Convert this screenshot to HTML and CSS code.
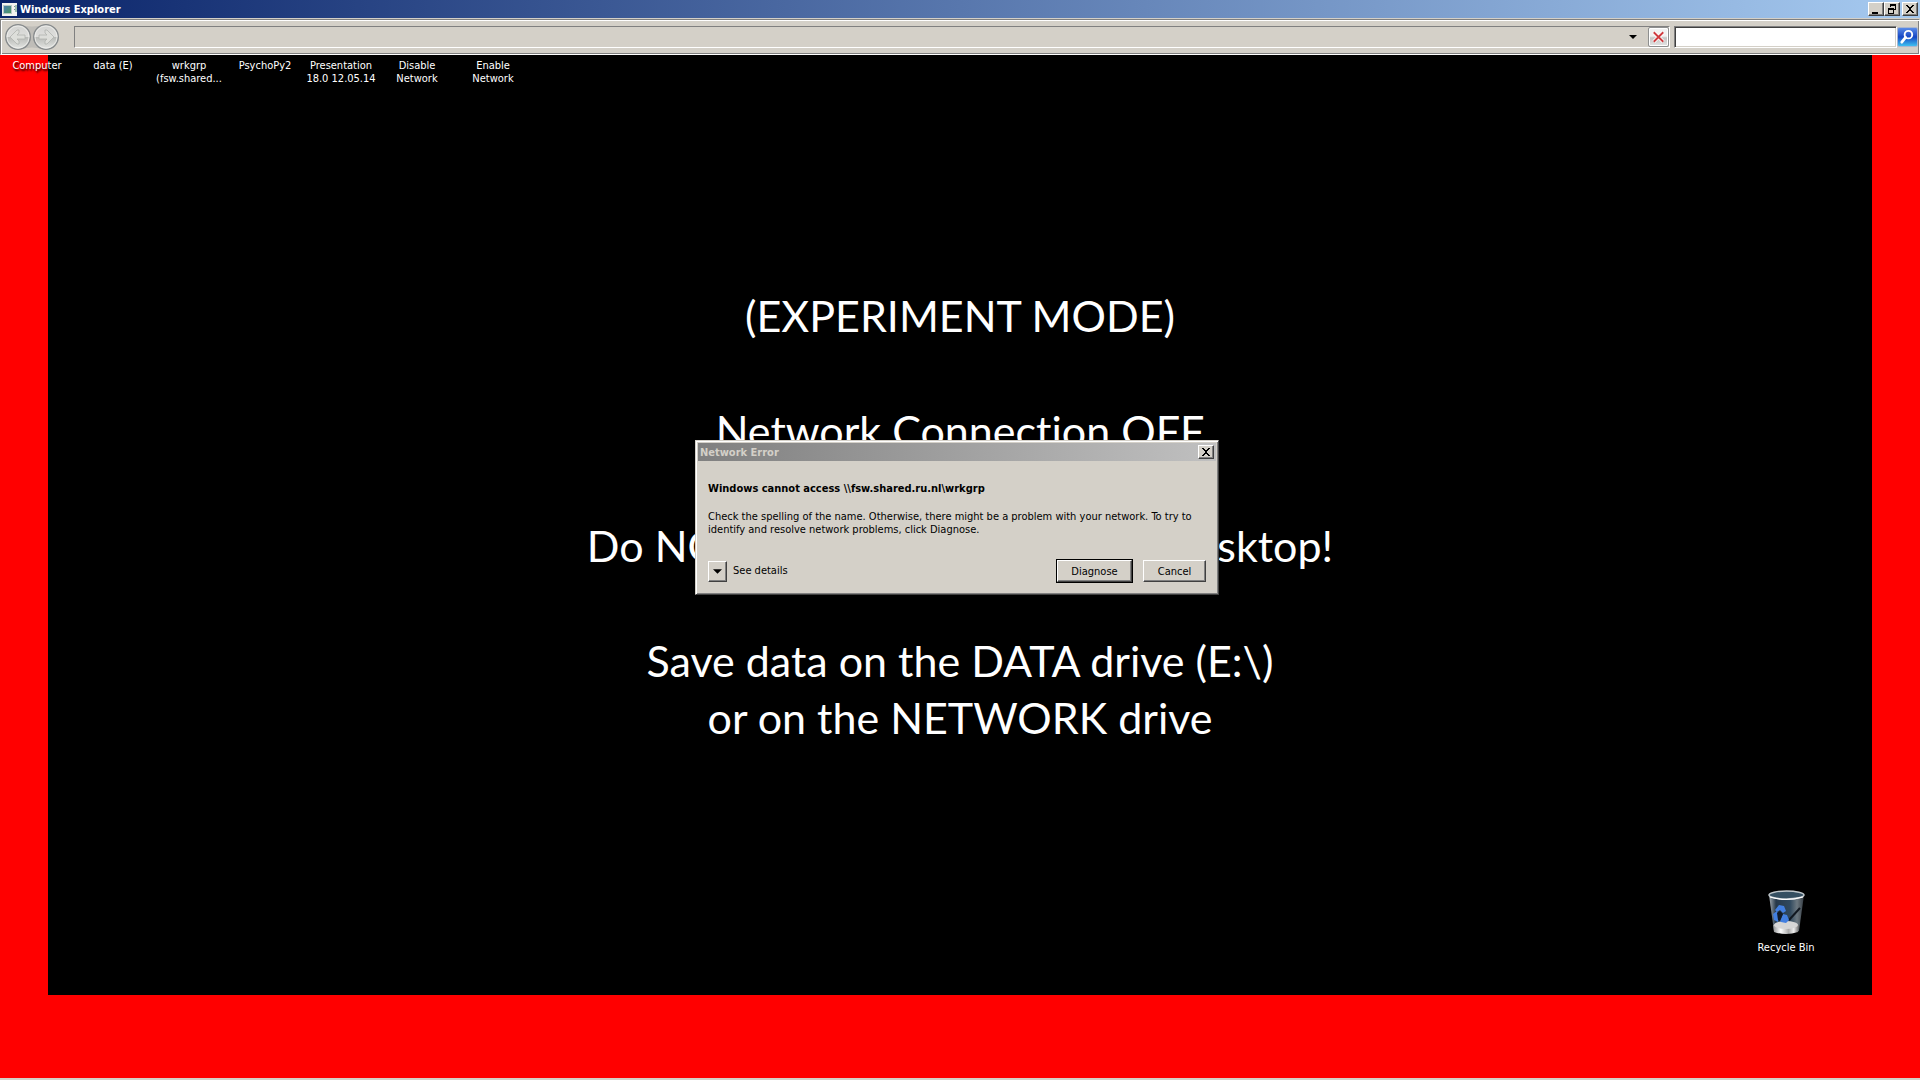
FILE: index.html
```html
<!DOCTYPE html>
<html lang="en">
<head>
<meta charset="utf-8">
<title>Windows Explorer</title>
<link rel="stylesheet" href="styles.css">
</head>
<body>
<header class="titlebar">
  <svg class="app-icon" viewBox="0 0 15 13" aria-hidden="true">
    <defs><linearGradient id="app" x1="0" y1="0" x2="1" y2="1"><stop offset="0" stop-color="#4a7fae"/><stop offset="1" stop-color="#4d9a62"/></linearGradient></defs>
    <rect width="15" height="13" fill="#f4f4f0"/>
    <rect x="1" y="2" width="9" height="9" fill="#b9c9c4"/>
    <rect x="2" y="3" width="7" height="7" fill="url(#app)"/>
    <path d="M12 3h1v1h-1zM12 6h1v1h-1z" fill="#7a8c98"/>
    <path d="M14 2v7" stroke="#4d8a72"/>
  </svg>
  <h1 class="titlebar-text">Windows Explorer</h1>
  <div class="window-buttons">
    <button class="box-button" aria-label="Minimize"><svg viewBox="0 0 12 10"><path d="M2 8h6v2H2z"/></svg></button>
    <button class="box-button" aria-label="Restore"><svg viewBox="0 0 12 10"><path d="M4 0h6v6H8V5h1V2H5v1H4zM2 4h6v6H2zM3 6v3h4V6z" fill-rule="evenodd"/></svg></button>
    <button class="box-button box-close" aria-label="Close"><svg viewBox="0 0 12 10"><path d="M2 1h2v1h1v1h2V2h1V1h2v1H9v1H8v1H7v2h1v1h1v1h1v1H8V8H7V7H5v1H4v1H2V8h1V7h1V6h1V4H4V3H3V2H2z"/></svg></button>
  </div>
</header>
<nav class="toolbar">
  <svg class="nav-plate" viewBox="0 0 56 28" role="img" aria-label="Back and Forward">
    <defs><linearGradient id="nav" x1="0" y1="0" x2="0" y2="1"><stop offset="0" stop-color="#d2d3d1"/><stop offset=".48" stop-color="#dededc"/><stop offset=".52" stop-color="#b9bbb8"/><stop offset="1" stop-color="#e6e7e4"/></linearGradient></defs>
    <path d="M14 1q14 5 28 0v26q-14-5-28 0z" fill="#bfbdb8"/>
    <g fill="url(#nav)" stroke="#85898b" stroke-width="1.3"><circle cx="14" cy="14" r="12.3"/><circle cx="42" cy="14" r="12.3"/></g>
    <g fill="none" stroke="#f0f0ee" stroke-width=".8"><circle cx="14" cy="14" r="11"/><circle cx="42" cy="14" r="11"/></g>
    <g fill="#dddeda" stroke="#b0b2ae" stroke-width=".8"><path d="M6 14l7-7h2v3l-2 2h8v4h-8l2 2v3h-2z"/><path d="M50 14l-7-7h-2v3l2 2h-8v4h8l-2 2v3h2z"/></g>
  </svg>
  <div class="address">
    <input class="address-input" type="text" aria-label="Address">
    <button class="address-drop" aria-label="Previous locations"><svg viewBox="0 0 8 4"><path d="M0 0h8L4 4z"/></svg></button>
    <button class="stop" aria-label="Stop"><svg viewBox="0 0 20 18"><path d="M5 4l10 10M15 4L5 14" stroke="#fff" stroke-width="4"/><path d="M5 4l10 10M15 4L5 14" stroke="#cf3b3f" stroke-width="2"/></svg></button>
  </div>
  <input class="search" type="text" aria-label="Search">
  <button class="go" aria-label="Search"><svg viewBox="0 0 19 19"><circle cx="11" cy="7" r="4" fill="none" stroke="#fff" stroke-width="2"/><path d="M8 10l-4 5" stroke="#fff" stroke-width="3" stroke-linecap="round"/></svg></button>
</nav>
<main class="desktop">
  <div class="wallpaper">
    <p>(EXPERIMENT MODE)</p>
    <p>Network Connection OFF</p>
    <p>Do NOT save your data on the desktop!</p>
    <p>Save data on the DATA drive (E:\)<br>or on the NETWORK drive</p>
  </div>
  <ul class="shortcuts">
    <li>Computer</li><li>data (E)</li><li>wrkgrp (fsw.shared...</li><li>PsychoPy2</li><li>Presentation 18.0 12.05.14</li><li>Disable Network</li><li>Enable Network</li>
  </ul>
  <div class="recycle">
    <svg viewBox="0 0 48 48" aria-hidden="true">
      <defs>
        <linearGradient id="glass"><stop offset="0" stop-color="#a5adb2"/><stop offset=".2" stop-color="#27394a"/><stop offset=".6" stop-color="#30495e"/><stop offset=".8" stop-color="#6c7880"/><stop offset="1" stop-color="#343b42"/></linearGradient>
        <linearGradient id="base"><stop offset="0" stop-color="#8d8f90"/><stop offset=".3" stop-color="#fff"/><stop offset=".6" stop-color="#aaa"/><stop offset=".8" stop-color="#eee"/><stop offset="1" stop-color="#666"/></linearGradient>
      </defs>
      <path d="M7 7h35l-5 36q-12 5-25 0z" fill="url(#glass)"/>
      <path d="M38 20L27 32" stroke="#111820" stroke-width="2"/>
      <path d="M11 37q12-4 26 0l-1 7q-12 4-24 0z" fill="url(#base)"/>
      <ellipse cx="24" cy="37" rx="12" ry="4" fill="#d6d6d6"/>
      <path d="M13 22l4-5 5 1 2 5-3 2-3-3-3 2zM11 26l4-3 2 5-1 6-4-2zM18 33l3-7 4 1 2 5-3 3-5-1z" fill="#427fe0"/>
      <path d="M15 25l3-2 3 3-3 7-2-1z" fill="#111b29"/>
      <ellipse cx="24.500" cy="7" rx="17.500" ry="4" fill="#354f61" stroke="#bfc6ca" stroke-width="1.500"/>
      <path d="M8 9q16 5 33 0" fill="none" stroke="#fff" stroke-width="1.200"/>
    </svg>
    <span>Recycle Bin</span>
  </div>
  <section class="dialog" role="dialog" aria-labelledby="dialog-title">
    <header class="dialog-bar">
      <h2 class="dialog-title" id="dialog-title">Network Error</h2>
      <button class="box-button" aria-label="Close"><svg viewBox="0 0 12 10"><path d="M2 1h2v1h1v1h2V2h1V1h2v1H9v1H8v1H7v2h1v1h1v1h1v1H8V8H7V7H5v1H4v1H2V8h1V7h1V6h1V4H4V3H3V2H2z"/></svg></button>
    </header>
    <div class="dialog-body">
      <h3>Windows cannot access \\fsw.shared.ru.nl\wrkgrp</h3>
      <p>Check the spelling of the name. Otherwise, there might be a problem with your network. To try to<br>identify and resolve network problems, click Diagnose.</p>
      <div class="dialog-actions">
        <button class="expand" id="expand" aria-labelledby="details"><svg viewBox="0 0 10 5"><path d="M0 0h10L5 5z"/></svg></button>
        <label id="details" for="expand">See details</label>
        <button class="push push-default">Diagnose</button>
        <button class="push">Cancel</button>
      </div>
    </div>
  </section>
</main>
</body>
</html>
```
FILE: styles.css
```css
* { box-sizing: border-box; }
body {
  margin: 0;
  min-height: 100vh;
  display: flex;
  flex-direction: column;
  background: #d4d0c8;
  color: #000;
  font: 11px/13px "DejaVu Sans Condensed", "DejaVu Sans", sans-serif;
}
h1, h2, h3, p, ul { margin: 0; padding: 0; font-size: inherit; }
button, input { font: inherit; color: inherit; margin: 0; padding: 0; border-radius: 0; }
svg { display: block; }

.titlebar {
  display: flex;
  align-items: center;
  height: 18px;
  padding: 0 2px;
  background: linear-gradient(90deg, #0a246a, #a6caf0);
  color: #fff;
}
.app-icon { width: 15px; height: 13px; }
.titlebar-text { flex: 1; padding-left: 3px; }
.window-buttons { display: flex; }
.box-button {
  width: 16px;
  height: 14px;
  background: #d4d0c8;
  border: 1px solid;
  border-color: #fff #404040 #404040 #fff;
  box-shadow: inset -1px -1px #808080;
}
.box-button svg { width: 12px; height: 10px; margin: 0 0 0 1px; }
.box-close { margin-left: 2px; }

.toolbar {
  display: flex;
  align-items: center;
  height: 36px;
  margin-top: 1px;
  padding: 0 0 0 3px;
  border: 1px solid #808080;
  border-right-color: #fff;
  border-bottom-color: #fff;
  box-shadow: inset 1px 1px #fff, inset -1px -1px #808080;
}
.nav-plate { width: 56px; height: 28px; margin-right: 14px; }
.address {
  flex: 1;
  display: flex;
  height: 22px;
  border: 1px solid;
  border-color: #808080 #fff #fff #808080;
}
.address-input { flex: 1; border: 0; background: none; }
.address-drop { width: 30px; border: 0; background: none; }
.address-drop svg { width: 8px; height: 4px; margin: 0 auto; }
.stop {
  width: 21px;
  height: 20px;
  border: 1px solid #8e8f8f;
  border-radius: 2px;
  background: linear-gradient(#f2f2f2 45%, #c4c5c4 55%, #e5e5e5);
  box-shadow: inset 0 0 0 1px #fff;
}
.stop svg { width: 19px; height: 18px; }
.search {
  width: 223px;
  height: 22px;
  margin-left: 4px;
  background: #fff;
  border: 1px solid;
  border-color: #808080 #fff #fff #808080;
  box-shadow: inset 1px 1px #404040, inset -1px -1px #d4d0c8;
}
.go {
  width: 21px;
  height: 20px;
  margin-right: 1px;
  border: 1px solid #a9b6d0;
  border-radius: 2px;
  background: linear-gradient(#5a8be8, #1546c4 50%, #3fc0f0);
}
.go svg { width: 18px; height: 18px; }

.desktop {
  position: relative;
  flex: 1;
  display: flex;
  margin-bottom: 1px;
  padding: 0 48px 83px;
  background: #f00;
  border-bottom: 1px solid #d4d0c8;
}
.wallpaper {
  flex: 1;
  display: flex;
  flex-direction: column;
  gap: 58px;
  padding-top: 232px;
  background: #000;
  color: #fff;
  text-align: center;
  font: 43px/57px Lato, sans-serif;
  font-variant-ligatures: none;
}
.shortcuts {
  position: absolute;
  top: 4px;
  left: 0;
  display: flex;
  gap: 2px;
  list-style: none;
  color: #fff;
  text-align: center;
  text-shadow: 1px 2px 2px #000;
}
.shortcuts li { width: 74px; }
.recycle {
  position: absolute;
  top: 833px;
  right: 97px;
  width: 74px;
  display: flex;
  flex-direction: column;
  align-items: center;
  gap: 5px;
  color: #fff;
}
.recycle svg { width: 48px; height: 48px; }

.dialog {
  position: absolute;
  top: 385px;
  left: calc(50% - 265px);
  width: 524px;
  padding: 2px;
  background: #d4d0c8;
  border: 1px solid;
  border-color: #d4d0c8 #404040 #404040 #d4d0c8;
  box-shadow: inset 1px 1px #fff, inset -1px -1px #808080;
}
.dialog-bar {
  display: flex;
  align-items: center;
  height: 18px;
  padding: 0 2px;
  background: linear-gradient(90deg, #808080, #c0c0c0);
  color: #d4d0c8;
}
.dialog-title { flex: 1; }
.dialog-body { padding: 21px 10px 10px; }
.dialog-body p { padding-top: 15px; }
.dialog-actions { display: flex; align-items: center; padding-top: 24px; }
.dialog-actions label { flex: 1; padding: 0 0 2px 6px; }
.expand, .push {
  background: #d4d0c8;
  border: 1px solid;
  border-color: #fff #404040 #404040 #fff;
  box-shadow: inset -1px -1px #808080;
}
.expand { width: 19px; height: 21px; }
.expand svg { width: 9px; height: 5px; margin: 0 auto; }
.push { width: 63px; height: 22px; }
.push-default { width: 75px; margin-right: 11px; outline: 1px solid #000; }
```
